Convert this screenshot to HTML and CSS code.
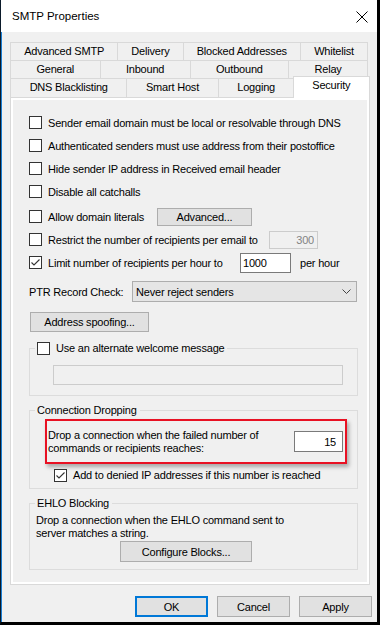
FILE: index.html
```html
<!DOCTYPE html>
<html lang="en">
<head>
    <meta charset="UTF-8">
    <title>SMTP Properties</title>
    <link rel="stylesheet" href="styles.css">
</head>
<body>
    <div class="window">
        <div class="titlebar">
            <span>SMTP Properties</span>
            <svg class="close" width="12" height="12" viewBox="0 0 12 12">
                <path d="M0.5 0.5 L11.5 11.5 M11.5 0.5 L0.5 11.5" stroke="#000" stroke-width="1" fill="none"/>
            </svg>
        </div>

        <div class="dialog">
            <div class="tabs">
                <div class="tab-row">
                    <span class="tab">Advanced SMTP</span>
                    <span class="tab">Delivery</span>
                    <span class="tab">Blocked Addresses</span>
                    <span class="tab">Whitelist</span>
                </div>
                <div class="tab-row">
                    <span class="tab">General</span>
                    <span class="tab">Inbound</span>
                    <span class="tab">Outbound</span>
                    <span class="tab">Relay</span>
                </div>
                <div class="tab-row last">
                    <span class="tab">DNS Blacklisting</span>
                    <span class="tab">Smart Host</span>
                    <span class="tab">Logging</span>
                    <span class="tab active">Security</span>
                </div>
            </div>

            <div class="panel">
                <div class="page">
                    <div class="opt">
                        <span class="cb"></span>
                        <span>Sender email domain must be local or resolvable through DNS</span>
                    </div>
                    <div class="opt">
                        <span class="cb"></span>
                        <span>Authenticated senders must use address from their postoffice</span>
                    </div>
                    <div class="opt">
                        <span class="cb"></span>
                        <span>Hide sender IP address in Received email header</span>
                    </div>
                    <div class="opt">
                        <span class="cb"></span>
                        <span>Disable all catchalls</span>
                    </div>
                    <div class="opt gap">
                        <span class="cb"></span>
                        <span class="lbl lbl-literals">Allow domain literals</span>
                        <button class="btn btn-advanced">Advanced...</button>
                    </div>
                    <div class="opt">
                        <span class="cb"></span>
                        <span class="lbl lbl-restrict">Restrict the number of recipients per email to</span>
                        <input class="txt txt-disabled num-restrict" value="300" disabled>
                    </div>
                    <div class="opt">
                        <span class="cb checked">
                            <svg width="11" height="11" viewBox="0 0 11 11"><path d="M1.5 5.5 L4 8 L9.5 2.5" stroke="#333" stroke-width="1.1" fill="none"/></svg>
                        </span>
                        <span class="lbl lbl-limit">Limit number of recipients per hour to</span>
                        <input class="txt num-limit" value="1000">
                        <span class="per-hour">per hour</span>
                    </div>

                    <div class="ptr-row">
                        <span class="ptr-label">PTR Record Check:</span>
                        <div class="combo">
                            <span>Never reject senders</span>
                            <svg width="9" height="6" viewBox="0 0 9 6"><path d="M0.5 0.5 L4.5 4.5 L8.5 0.5" stroke="#444" stroke-width="1" fill="none"/></svg>
                        </div>
                    </div>

                    <div class="spoof-row">
                        <button class="btn btn-spoof">Address spoofing...</button>
                    </div>

                    <fieldset class="group group-welcome">
                        <legend><span class="cb"></span><span>Use an alternate welcome message</span></legend>
                        <input class="txt txt-disabled welcome-input" disabled>
                    </fieldset>

                    <fieldset class="group group-drop">
                        <legend>Connection Dropping</legend>
                        <div class="highlight">
                            <span class="drop-text">Drop a connection when the failed number of commands or recipients reaches:</span>
                            <input class="txt num-drop" value="15">
                        </div>
                        <div class="opt deny">
                            <span class="cb checked">
                                <svg width="11" height="11" viewBox="0 0 11 11"><path d="M1.5 5.5 L4 8 L9.5 2.5" stroke="#333" stroke-width="1.1" fill="none"/></svg>
                            </span>
                            <span>Add to denied IP addresses if this number is reached</span>
                        </div>
                    </fieldset>

                    <fieldset class="group group-ehlo">
                        <legend>EHLO Blocking</legend>
                        <p class="ehlo-text">Drop a connection when the EHLO command sent to server matches a string.</p>
                        <button class="btn btn-blocks">Configure Blocks...</button>
                    </fieldset>
                </div>
            </div>

            <div class="footer">
                <button class="btn btn-footer default">OK</button>
                <button class="btn btn-footer">Cancel</button>
                <button class="btn btn-footer">Apply</button>
            </div>
        </div>
    </div>
</body>
</html>
```

FILE: styles.css
```css
body {
    margin: 0;
    background: #000;
    font-family: "Liberation Sans", Arial, sans-serif;
    font-size: 11px;
    letter-spacing: -0.2px;
    color: #000;
}

.window {
    width: 380px;
    height: 625px;
    box-sizing: border-box;
    border-left: 1px solid #0b1a2a;
    border-right: 3px solid #000;
    border-bottom: 3px solid #000;
    background: #f0f0f0;
    box-shadow: inset 1px 0 0 #1a7fd4;
    white-space: nowrap;
}

.titlebar {
    height: 32px;
    background: #fff;
    display: flex;
    align-items: center;
    justify-content: space-between;
    padding: 0 9px 0 11px;
    font-size: 11.5px;
    letter-spacing: 0;
}

.close {
    margin-top: 1px;
}

.dialog {
    padding: 10px 7px 0 9px;
}

/* tabs */
.tabs {
    width: 358px;
}

.tab-row {
    display: flex;
    height: 18px;
    padding-left: 1px;
}

.tab-row.last {
    height: 19px;
}

.tab {
    flex: 1 1 auto;
    text-align: center;
    border: 1px solid #d9d9d9;
    border-bottom: none;
    margin-left: -1px;
    background: #f0f0f0;
    line-height: 17px;
}

.tab.active {
    position: relative;
    z-index: 1;
    background: #fff;
    margin: -2px -2px -1px -2px;
    line-height: 16px;
}

.panel {
    height: 488px;
    box-sizing: border-box;
    border: 1px solid #d9d9d9;
    background: #fff;
    padding: 2px;
}

.page {
    height: 100%;
    box-sizing: border-box;
    background: #f0f0f0;
    padding: 11px 10px 0 16px;
}

/* options */
.opt {
    display: flex;
    align-items: center;
    height: 23px;
}

.opt.gap {
    margin-top: 2px;
}

.cb {
    width: 13px;
    height: 13px;
    box-sizing: border-box;
    border: 1px solid #333;
    background: #fff;
    margin-right: 6px;
    flex: none;
    display: flex;
    align-items: center;
    justify-content: center;
}

.lbl {
    flex: none;
}

.lbl-literals { width: 109px; }
.lbl-restrict { width: 221px; }
.lbl-limit { width: 192px; }

.btn {
    font-family: inherit;
    font-size: 11px;
    letter-spacing: -0.2px;
    color: #000;
    background: #e1e1e1;
    border: 1px solid #adadad;
    padding: 0;
    margin: 0;
    box-sizing: border-box;
}

.btn-advanced {
    width: 95px;
    height: 18px;
}

.txt {
    font-family: inherit;
    font-size: 11px;
    letter-spacing: -0.2px;
    color: #000;
    background: #fff;
    border: 1px solid #7a7a7a;
    box-sizing: border-box;
    padding: 0 3px;
    margin: 0;
    outline: none;
}

.txt-disabled {
    background: #f0f0f0;
    border-color: #cccccc;
    color: #838383;
}

.num-restrict {
    width: 49px;
    height: 18px;
    text-align: right;
}

.num-limit {
    width: 51px;
    height: 20px;
    padding-left: 2px;
}

.per-hour {
    margin-left: 9px;
}

/* ptr */
.ptr-row {
    display: flex;
    align-items: center;
    height: 23px;
    margin-top: 6px;
}

.ptr-label {
    width: 103px;
    flex: none;
}

.combo {
    width: 226px;
    height: 21px;
    box-sizing: border-box;
    background: #e5e5e5;
    border: 1px solid #adadad;
    display: flex;
    align-items: center;
    justify-content: space-between;
    padding: 0 5px 0 3px;
}

.spoof-row {
    display: flex;
    align-items: center;
    height: 23px;
    margin-top: 7px;
}

.btn-spoof {
    width: 119px;
    height: 20px;
    margin-left: 1px;
}

/* group boxes */
.group {
    margin: 0;
    padding: 0;
    width: 329px;
    box-sizing: border-box;
    border: 1px solid #dcdcdc;
}

.group legend {
    margin-left: 5px;
    padding: 0 3px 0 2px;
    line-height: 14px;
}

.group-welcome {
    margin-top: 8px;
}

.group-welcome legend {
    display: flex;
    align-items: center;
}

.welcome-input {
    display: block;
    width: 290px;
    height: 20px;
    margin: 10px 0 10px 23px;
}

.group-drop {
    margin-top: 7px;
}

.highlight {
    width: 302px;
    height: 45px;
    box-sizing: border-box;
    margin: 2px 0 0 15px;
    border: 2px solid #e81123;
    box-shadow: 2px 3px 4px rgba(0, 0, 0, 0.3);
    display: flex;
    align-items: center;
    justify-content: space-between;
    padding: 0 2px 0 1px;
}

.drop-text {
    width: 236px;
    line-height: 13px;
    white-space: normal;
}

.num-drop {
    width: 49px;
    height: 21px;
    text-align: right;
    padding-right: 6px;
}

.opt.deny {
    height: 22px;
    margin-left: 24px;
    margin-bottom: 2px;
}

.group-ehlo {
    margin-top: 7px;
}

.ehlo-text {
    margin: 4px 0 0 6px;
    width: 258px;
    line-height: 13px;
    white-space: normal;
}

.btn-blocks {
    display: block;
    width: 132px;
    height: 21px;
    margin: 1px 0 7px 90px;
}

/* footer */
.footer {
    display: flex;
    justify-content: flex-end;
    gap: 9px;
    margin-top: 11px;
    margin-right: -2px;
}

.btn-footer {
    width: 73px;
    height: 21px;
}

.btn-footer.default {
    border: 2px solid #0078d7;
}
```
